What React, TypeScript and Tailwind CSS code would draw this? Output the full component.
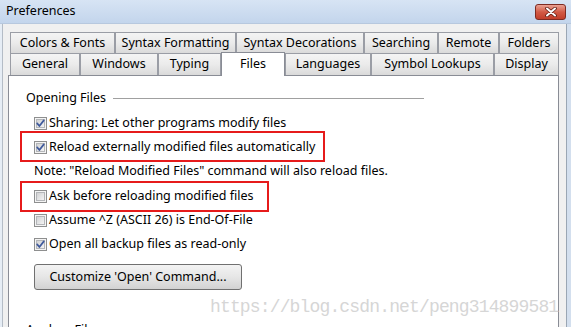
import React, { useId } from 'react';

const font = { fontFamily: '"Noto Sans", "Open Sans", sans-serif' };

const row1 = [
  { label: 'Colors & Fonts', w: 105 },
  { label: 'Syntax Formatting', w: 121 },
  { label: 'Syntax Decorations', w: 128 },
  { label: 'Searching', w: 74 },
  { label: 'Remote', w: 61 },
  { label: 'Folders', w: 60 },
];

const row2 = [
  { label: 'General', w: 70 },
  { label: 'Windows', w: 78 },
  { label: 'Typing', w: 63 },
  { label: 'Files', w: 64, selected: true },
  { label: 'Languages', w: 86 },
  { label: 'Symbol Lookups', w: 123 },
  { label: 'Display', w: 65 },
];

const Tab: React.FC<{ label: string; w: number; selected?: boolean }> = ({ label, w, selected }) =>
  selected ? (
    <div
      className="relative z-10 -mt-[1px] h-[24px] shrink-0 self-start border border-b-0 border-[#898c95] bg-white flex justify-center pt-[2px] text-[12.5px] text-black"
      style={{ width: w }}
    >
      {label}
    </div>
  ) : (
    <div
      className="h-full shrink-0 border border-b-0 border-[#9a9da5] bg-gradient-to-b from-[#f4f4f4] via-[#ebebeb] to-[#dadada] flex items-center justify-center text-[12.5px] text-black"
      style={{ width: w }}
    >
      {label}
    </div>
  );

const Checkbox: React.FC<{ checked?: boolean }> = ({ checked }) => {
  const id = useId();
  return (
    <svg width="13" height="13" viewBox="0 0 13 13" className="shrink-0">
      <defs>
        <linearGradient id={id} x1="0" y1="0" x2="1" y2="1">
          <stop offset="0" stopColor="#cfd0d2" />
          <stop offset="1" stopColor="#f6f6f6" />
        </linearGradient>
      </defs>
      <rect x="0.5" y="0.5" width="12" height="12" fill="#f4f4f4" stroke="#8e8f8f" />
      <rect x="2.5" y="2.5" width="8" height="8" fill={`url(#${id})`} stroke="#b4b6b9" />
      {checked && (
        <path d="M3.2 6.4 L5.4 9 L9.8 3.4" fill="none" stroke="#3f5a9c" strokeWidth="1.7" strokeLinecap="round" strokeLinejoin="round" />
      )}
    </svg>
  );
};

const CheckRow: React.FC<{ label: string; checked?: boolean }> = ({ label, checked }) => (
  <div className="h-[24px] flex items-center gap-[2px] text-[12.5px] text-black">
    <Checkbox checked={checked} />
    <span>{label}</span>
  </div>
);

const GroupHeader: React.FC<{ label: string }> = ({ label }) => (
  <div className="h-[16px] w-[398px] flex items-center text-[12.5px] text-black">
    <span>{label}</span>
    <div className="ml-[7px] flex-1 h-px bg-[#a0a0a0]" />
  </div>
);

export default function App() {
  return (
    <div className="relative w-[571px] h-[327px] overflow-hidden flex flex-col bg-[#f0f0f0]" style={font}>
      {/* title bar */}
      <div className="h-[24px] shrink-0 flex items-center justify-between pl-[6px] pr-[5px] bg-gradient-to-b from-[#d7e4f4] to-[#c3d5ec] border-b border-[#b7c8de]">
        <span className="text-[12.5px] text-black">Preferences</span>
        <div className="w-[31px] h-[16px] rounded-[3px] border border-[#7d2b22] bg-gradient-to-b from-[#e9a194] via-[#d25a45] to-[#c23e2a] flex items-center justify-center">
          <svg width="12" height="10" viewBox="0 0 12 10">
            <path d="M2 1.5 L10 8.5 M10 1.5 L2 8.5" stroke="#5e1a12" strokeWidth="3.6" strokeLinecap="round" />
            <path d="M2 1.5 L10 8.5 M10 1.5 L2 8.5" stroke="#ffffff" strokeWidth="2" strokeLinecap="round" />
          </svg>
        </div>
      </div>

      <div className="flex-1 flex min-h-0">
        <div className="w-[3px] shrink-0 bg-[#e6edf5] border-r border-[#b4bcc6]" />

        <div className="flex-1 flex flex-col pt-[8px] pl-[5px] pr-[7px] min-w-0">
          <div className="pl-[2px] flex flex-col">
            <div className="flex h-[21px]">
              {row1.map((t) => (
                <Tab key={t.label} {...t} />
              ))}
            </div>
            <div className="flex h-[22px]">
              {row2.map((t) => (
                <Tab key={t.label} {...t} />
              ))}
            </div>
          </div>

          <div className="flex-1 bg-white border border-b-0 border-[#898c95] pt-[14px] pl-[17px] flex flex-col items-start">
            <GroupHeader label="Opening Files" />
            <div className="mt-[5px] pl-[8px] flex flex-col">
              <CheckRow label="Sharing: Let other programs modify files" checked />
              <CheckRow label="Reload externally modified files automatically" checked />
              <div className="h-[25px] flex items-center text-[12.5px] text-black">
                Note: "Reload Modified Files" command will also reload files.
              </div>
              <CheckRow label="Ask before reloading modified files" />
              <CheckRow label="Assume ^Z (ASCII 26) is End-Of-File" />
              <CheckRow label="Open all backup files as read-only" checked />
              <button className="mt-[8px] w-[208px] h-[26px] rounded-[3px] border border-[#707070] bg-gradient-to-b from-[#f3f3f3] via-[#e6e6e6] to-[#d2d2d2] text-[12.5px] text-black flex items-center justify-center">
                Customize 'Open' Command...
              </button>
            </div>
            <div className="mt-[32px]">
              <GroupHeader label="Analyze Files" />
            </div>
          </div>
        </div>

        <div className="w-[5px] shrink-0 bg-[#d3dfee] border-l border-[#9aa6b4]" />
      </div>

      {/* annotation boxes */}
      <div className="absolute left-[20px] top-[131px] w-[305px] h-[31px] border-2 border-[#e61b1b]" />
      <div className="absolute left-[20px] top-[181px] w-[249px] h-[31px] border-2 border-[#e61b1b]" />

      {/* watermark */}
      <div
        className="absolute left-[210px] top-[294px] text-[18px] tracking-[-0.85px] text-[#d6d6d6] whitespace-nowrap"
        style={{ fontFamily: '"Liberation Mono", monospace' }}
      >
        https://blog.csdn.net/peng314899581
      </div>
    </div>
  );
}
